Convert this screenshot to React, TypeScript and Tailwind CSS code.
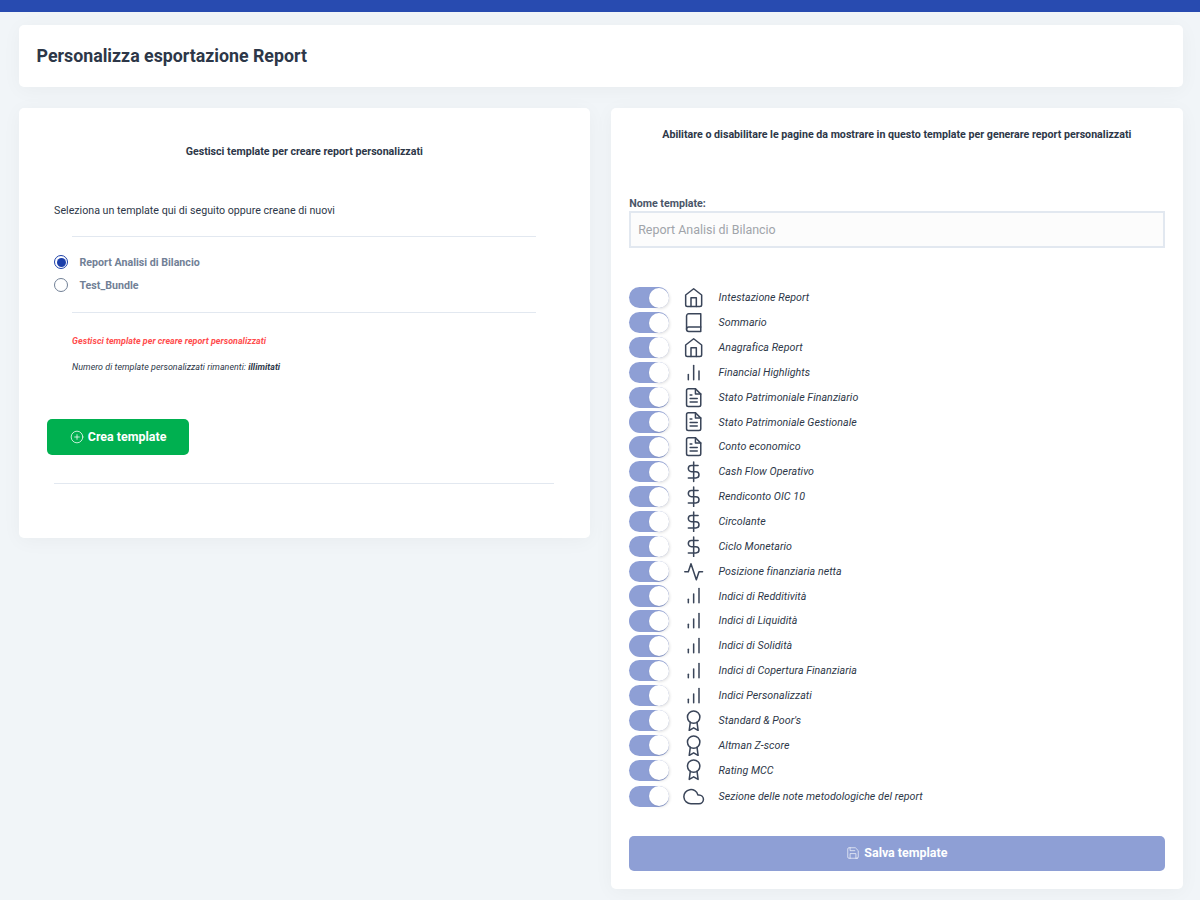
import { useState } from "react";
import type { IconType } from "react-icons";
import {
  FiActivity,
  FiAward,
  FiBarChart,
  FiBarChart2,
  FiBook,
  FiCloud,
  FiDollarSign,
  FiFileText,
  FiHome,
  FiPlusCircle,
  FiSave,
} from "react-icons/fi";

const templates = ["Report Analisi di Bilancio", "Test_Bundle"];

const pages: { label: string; icon: IconType }[] = [
  { label: "Intestazione Report", icon: FiHome },
  { label: "Sommario", icon: FiBook },
  { label: "Anagrafica Report", icon: FiHome },
  { label: "Financial Highlights", icon: FiBarChart2 },
  { label: "Stato Patrimoniale Finanziario", icon: FiFileText },
  { label: "Stato Patrimoniale Gestionale", icon: FiFileText },
  { label: "Conto economico", icon: FiFileText },
  { label: "Cash Flow Operativo", icon: FiDollarSign },
  { label: "Rendiconto OIC 10", icon: FiDollarSign },
  { label: "Circolante", icon: FiDollarSign },
  { label: "Ciclo Monetario", icon: FiDollarSign },
  { label: "Posizione finanziaria netta", icon: FiActivity },
  { label: "Indici di Redditività", icon: FiBarChart },
  { label: "Indici di Liquidità", icon: FiBarChart },
  { label: "Indici di Solidità", icon: FiBarChart },
  { label: "Indici di Copertura Finanziaria", icon: FiBarChart },
  { label: "Indici Personalizzati", icon: FiBarChart },
  { label: "Standard & Poor's", icon: FiAward },
  { label: "Altman Z-score", icon: FiAward },
  { label: "Rating MCC", icon: FiAward },
];

const Radio = ({ checked }: { checked: boolean }) => (
  <span
    className={`flex h-[14.4px] w-[14.4px] items-center justify-center rounded-full border bg-white ${
      checked ? "border-[#1c3faa]" : "border-[#718096]"
    }`}
  >
    {checked && <span className="h-[9px] w-[9px] rounded-full bg-[#1c3faa]" />}
  </span>
);

const Switch = () => (
  <span className="flex h-[21.3px] w-[40.2px] shrink-0 items-center justify-end rounded-full bg-[#8e9fd5]">
    <span className="h-[20.3px] w-[20.3px] rounded-full bg-white shadow-[1px_1px_3px_rgba(0,0,0,0.12)]" />
  </span>
);

const PageRow = ({ label, icon: Icon }: { label: string; icon: IconType }) => (
  <div className="flex h-[24.87px] items-center">
    <Switch />
    <Icon className="ml-[14.1px] h-[21.33px] w-[21.33px] shrink-0 stroke-[1.7] text-[#3a4559]" />
    <span className="ml-[13.8px] pt-px text-[10.67px] italic tracking-[0.05px]">{label}</span>
  </div>
);

export default function App() {
  const [selected, setSelected] = useState(0);

  return (
    <div className="h-[900px] overflow-hidden bg-[#f1f5f8] font-[Roboto,sans-serif] text-[10.67px] leading-4 text-[#2d3748]">
      <div className="h-3 bg-[#284bb0]" />

      <div className="pl-[18.6px] pr-[17.4px] pt-[13px]">
        <header className="flex h-[62px] items-center rounded-[5px] bg-white px-[18px] shadow-[0_3px_20px_rgba(0,0,0,0.04)]">
          <h1 className="text-[17.78px] font-bold">Personalizza esportazione Report</h1>
        </header>

        <div className="mt-[21px] flex items-start gap-[21.2px]">
          <section className="h-[429.5px] w-[571.4px] rounded-[5px] bg-white px-[35.5px] pt-9 shadow-[0_3px_20px_rgba(0,0,0,0.04)]">
            <h2 className="text-center font-bold">Gestisci template per creare report personalizzati</h2>
            <p className="mt-[43px]">Seleziona un template qui di seguito oppure creane di nuovi</p>

            <hr className="mx-[18px] mt-[17px] border-[#e2e8f0]" />
            <div className="mt-[13.5px] flex flex-col">
              {templates.map((name, i) => (
                <button
                  key={name}
                  className="flex h-[23.2px] items-center gap-[11px] font-bold text-[#718096]"
                  onClick={() => setSelected(i)}
                >
                  <Radio checked={selected === i} />
                  <span className="pt-[2px]">{name}</span>
                </button>
              ))}
            </div>
            <hr className="mx-[18px] mt-[15px] border-[#e2e8f0]" />

            <div className="ml-[18px] mt-5 text-[8.89px] italic">
              <p className="font-bold tracking-[0.04px] text-[#ff4d4d]">
                Gestisci template per creare report personalizzati
              </p>
              <p className="mt-[10px] tracking-[0.04px]">
                Numero di template personalizzati rimanenti: <b>illimitati</b>
              </p>
            </div>

            <button className="-ml-[7px] mt-[44px] flex h-[36px] w-[142px] items-center justify-center rounded-[5px] bg-[#00b050] text-[12.44px] font-bold text-white">
              <FiPlusCircle className="mr-1 h-[14px] w-[14px] stroke-[1.3]" />
              Crea template
            </button>
            <hr className="mt-[28.5px] border-[#e2e8f0]" />
          </section>

          <section className="h-[781px] flex-1 rounded-[5px] bg-white px-[18px] pt-[19px] shadow-[0_3px_20px_rgba(0,0,0,0.04)]">
            <h2 className="text-center font-bold">
              Abilitare o disabilitare le pagine da mostrare in questo template per generare report personalizzati
            </h2>

            <label className="mt-[53px] block font-bold text-[#4a5568]">Nome template:</label>
            <input
              className="-mt-px block h-[37px] w-full border-2 border-[#e2e8f0] bg-[#fcfcfc] px-[7px] text-[12.44px] text-[#a0a4aa]"
              value={templates[selected]}
              readOnly
            />

            <div className="mt-[37.4px]">
              {pages.map((page) => (
                <PageRow key={page.label} {...page} />
              ))}
              <div className="pt-[1.3px]">
                <PageRow label="Sezione delle note metodologiche del report" icon={FiCloud} />
              </div>
            </div>

            <button className="mt-[26.8px] flex h-[35px] w-full items-center justify-center rounded-[5px] bg-[#8e9fd5] text-[12.44px] font-bold text-white">
              <FiSave className="mr-1 h-[14px] w-[14px] stroke-[1.4] text-white/80" />
              Salva template
            </button>
          </section>
        </div>
      </div>
    </div>
  );
}
